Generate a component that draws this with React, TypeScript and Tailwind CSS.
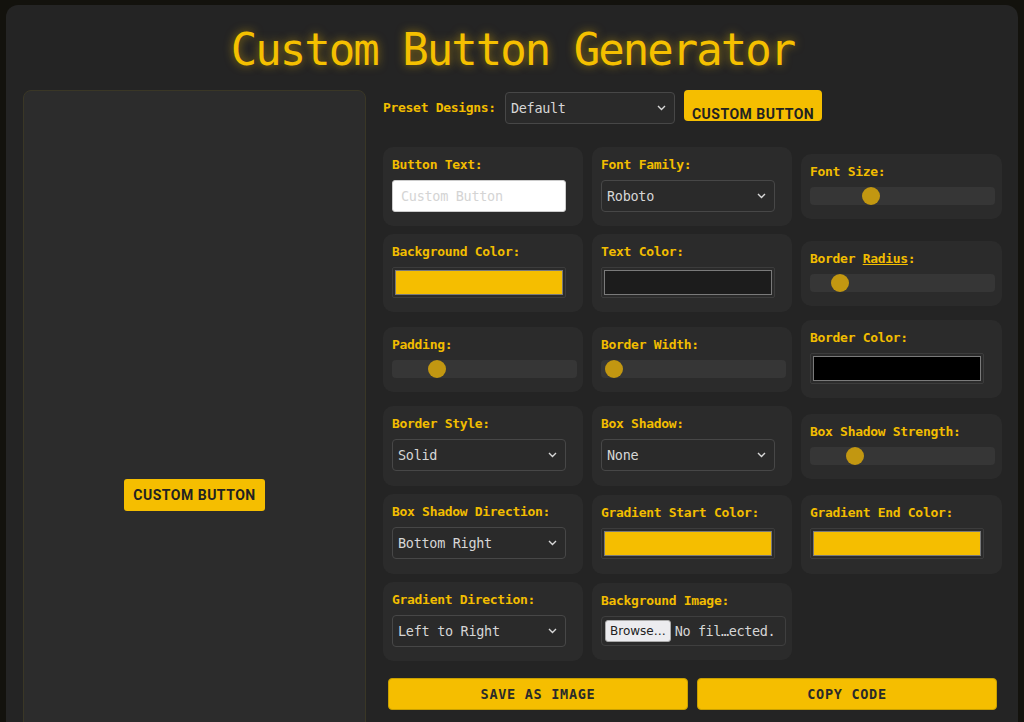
import React from 'react';

const mono = "font-['DejaVu_Sans_Mono',monospace]";

function Label({ children }: { children: React.ReactNode }) {
  return <div className={`${mono} text-[13px] tracking-[-0.3px] leading-[16px] font-bold text-[#f2bd00] mb-[7px] whitespace-nowrap`}>{children}</div>;
}

function Card({ children, className = '' }: { children: React.ReactNode; className?: string }) {
  return <div className={`bg-[#2b2b2b] rounded-[10px] pt-[10px] pb-[14px] px-[9px] ${className}`}>{children}</div>;
}

function Chevron() {
  return (
    <svg width="9" height="6" viewBox="0 0 9 6" className="shrink-0">
      <path d="M1 1 L4.5 4.5 L8 1" fill="none" stroke="#d8d8d8" strokeWidth="1.4" />
    </svg>
  );
}

function Select({ value, w = 'w-[174px]' }: { value: string; w?: string }) {
  return (
    <div className={`${w} h-[32px] flex items-center justify-between pl-[5px] pr-[8px] bg-[#2a2a2a] border border-[#474747] rounded-[4px]`}>
      <span className={`${mono} text-[13.5px] tracking-[-0.3px] text-[#d6d6d6]`}>{value}</span>
      <Chevron />
    </div>
  );
}

function Slider({ pos }: { pos: number }) {
  return (
    <div className="w-[185px] h-[18px] bg-[#363636] rounded-[4px] flex items-center">
      <div className="w-[18px] h-[18px] rounded-full bg-[#c29711]" style={{ marginLeft: pos }} />
    </div>
  );
}

function ColorBox({ color }: { color: string }) {
  return (
    <div className="w-[174px] h-[31px] border border-[#3c3c3c] bg-[#2b2b2b] rounded-[2px] p-[2px]">
      <div className="w-full h-full border border-[#7a7a7a]" style={{ backgroundColor: color }} />
    </div>
  );
}

export default function App() {
  return (
    <div className="min-h-screen bg-[#13120d] pt-[5px] px-[6px]">
      <div className="bg-[#242424] rounded-[12px] pt-[22px] pb-[20px] pl-[17px] pr-[16px]">
        <h1 className={`${mono} text-center text-[44px] tracking-[-2px] leading-[46px] text-[#f5c000] [text-shadow:0_0_10px_rgba(245,192,0,0.55)] mb-[17px]`}>
          Custom Button Generator
        </h1>

        <div className="flex gap-[17px] items-start">
          <div className="w-[343px] h-[808px] shrink-0 bg-[#2c2c2c] border border-[#3a3726] rounded-[8px] flex items-center justify-center">
            <button className="font-['Roboto',sans-serif] font-bold text-[14px] tracking-[0.5px] text-[#222] bg-[#f5be00] rounded-[3px] px-[9px] h-[32px] mt-[2px]">
              CUSTOM BUTTON
            </button>
          </div>

          <div className="w-[619px]">
            <div className="flex items-center gap-[9px] h-[33px]">
              <span className={`${mono} text-[13px] tracking-[-0.3px] font-bold text-[#f2bd00] pt-[3px]`}>Preset Designs:</span>
              <div className="pt-[3px]">
                <Select value="Default" w="w-[170px]" />
              </div>
              <button className="font-['Roboto',sans-serif] font-bold text-[14px] tracking-[0.5px] leading-[14px] text-[#222] bg-[#f5be00] rounded-[4px] px-[8px] h-[31px] pt-[16px] self-start">
                CUSTOM BUTTON
              </button>
            </div>

            <div className="grid grid-cols-[200px_200px_201px] gap-x-[9px] gap-y-[8px] items-center mt-[24px]">
              <Card>
                <Label>Button Text:</Label>
                <div className="w-[174px] h-[32px] bg-white border border-[#ccc] rounded-[3px] flex items-center px-[8px]">
                  <span className={`${mono} text-[13.5px] tracking-[-0.3px] text-[#d4d4d4]`}>Custom Button</span>
                </div>
              </Card>
              <Card>
                <Label>Font Family:</Label>
                <Select value="Roboto" />
              </Card>
              <Card>
                <Label>Font Size:</Label>
                <Slider pos={52} />
              </Card>

              <Card>
                <Label>Background Color:</Label>
                <ColorBox color="#f5be00" />
              </Card>
              <Card>
                <Label>Text Color:</Label>
                <ColorBox color="#1c1c1c" />
              </Card>
              <Card>
                <Label>Border <span className="underline">Radius</span>:</Label>
                <Slider pos={21} />
              </Card>

              <Card>
                <Label>Padding:</Label>
                <Slider pos={36} />
              </Card>
              <Card>
                <Label>Border Width:</Label>
                <Slider pos={4} />
              </Card>
              <Card>
                <Label>Border Color:</Label>
                <ColorBox color="#000000" />
              </Card>

              <Card className="pb-[15px]">
                <Label>Border Style:</Label>
                <Select value="Solid" />
              </Card>
              <Card className="pb-[15px]">
                <Label>Box Shadow:</Label>
                <Select value="None" />
              </Card>
              <Card>
                <Label>Box Shadow Strength:</Label>
                <Slider pos={36} />
              </Card>

              <Card className="pb-[15px]">
                <Label>Box Shadow Direction:</Label>
                <Select value="Bottom Right" />
              </Card>
              <Card className="pb-[15px]">
                <Label>Gradient Start Color:</Label>
                <ColorBox color="#f5be00" />
              </Card>
              <Card className="pb-[15px]">
                <Label>Gradient End Color:</Label>
                <ColorBox color="#f5be00" />
              </Card>

              <Card>
                <Label>Gradient Direction:</Label>
                <Select value="Left to Right" />
              </Card>
              <Card className="pb-[12px]">
                <Label>Background Image:</Label>
                <div className="w-[185px] h-[30px] border border-[#3f3f3f] rounded-[4px] flex items-center px-[3px] gap-[4px]">
                  <span className="font-['DejaVu_Sans',sans-serif] text-[12px] text-[#222] bg-[#ececef] border border-[#aaa] rounded-[3px] px-[4px] leading-[20px]">Browse…</span>
                  <span className={`${mono} text-[13.5px] tracking-[-0.4px] text-[#d6d6d6] whitespace-nowrap`}>No fil…ected.</span>
                </div>
              </Card>
            </div>

            <div className="flex gap-[9px] px-[5px] mt-[17px]">
              <button className={`${mono} flex-1 h-[32px] bg-[#f5be00] rounded-[4px] border border-[#c9a000] text-[13.5px] font-bold tracking-[0.7px] text-[#2a2a2a]`}>
                SAVE AS IMAGE
              </button>
              <button className={`${mono} flex-1 h-[32px] bg-[#f5be00] rounded-[4px] border border-[#c9a000] text-[13.5px] font-bold tracking-[0.7px] text-[#2a2a2a]`}>
                COPY CODE
              </button>
            </div>
          </div>
        </div>
      </div>
    </div>
  );
}
